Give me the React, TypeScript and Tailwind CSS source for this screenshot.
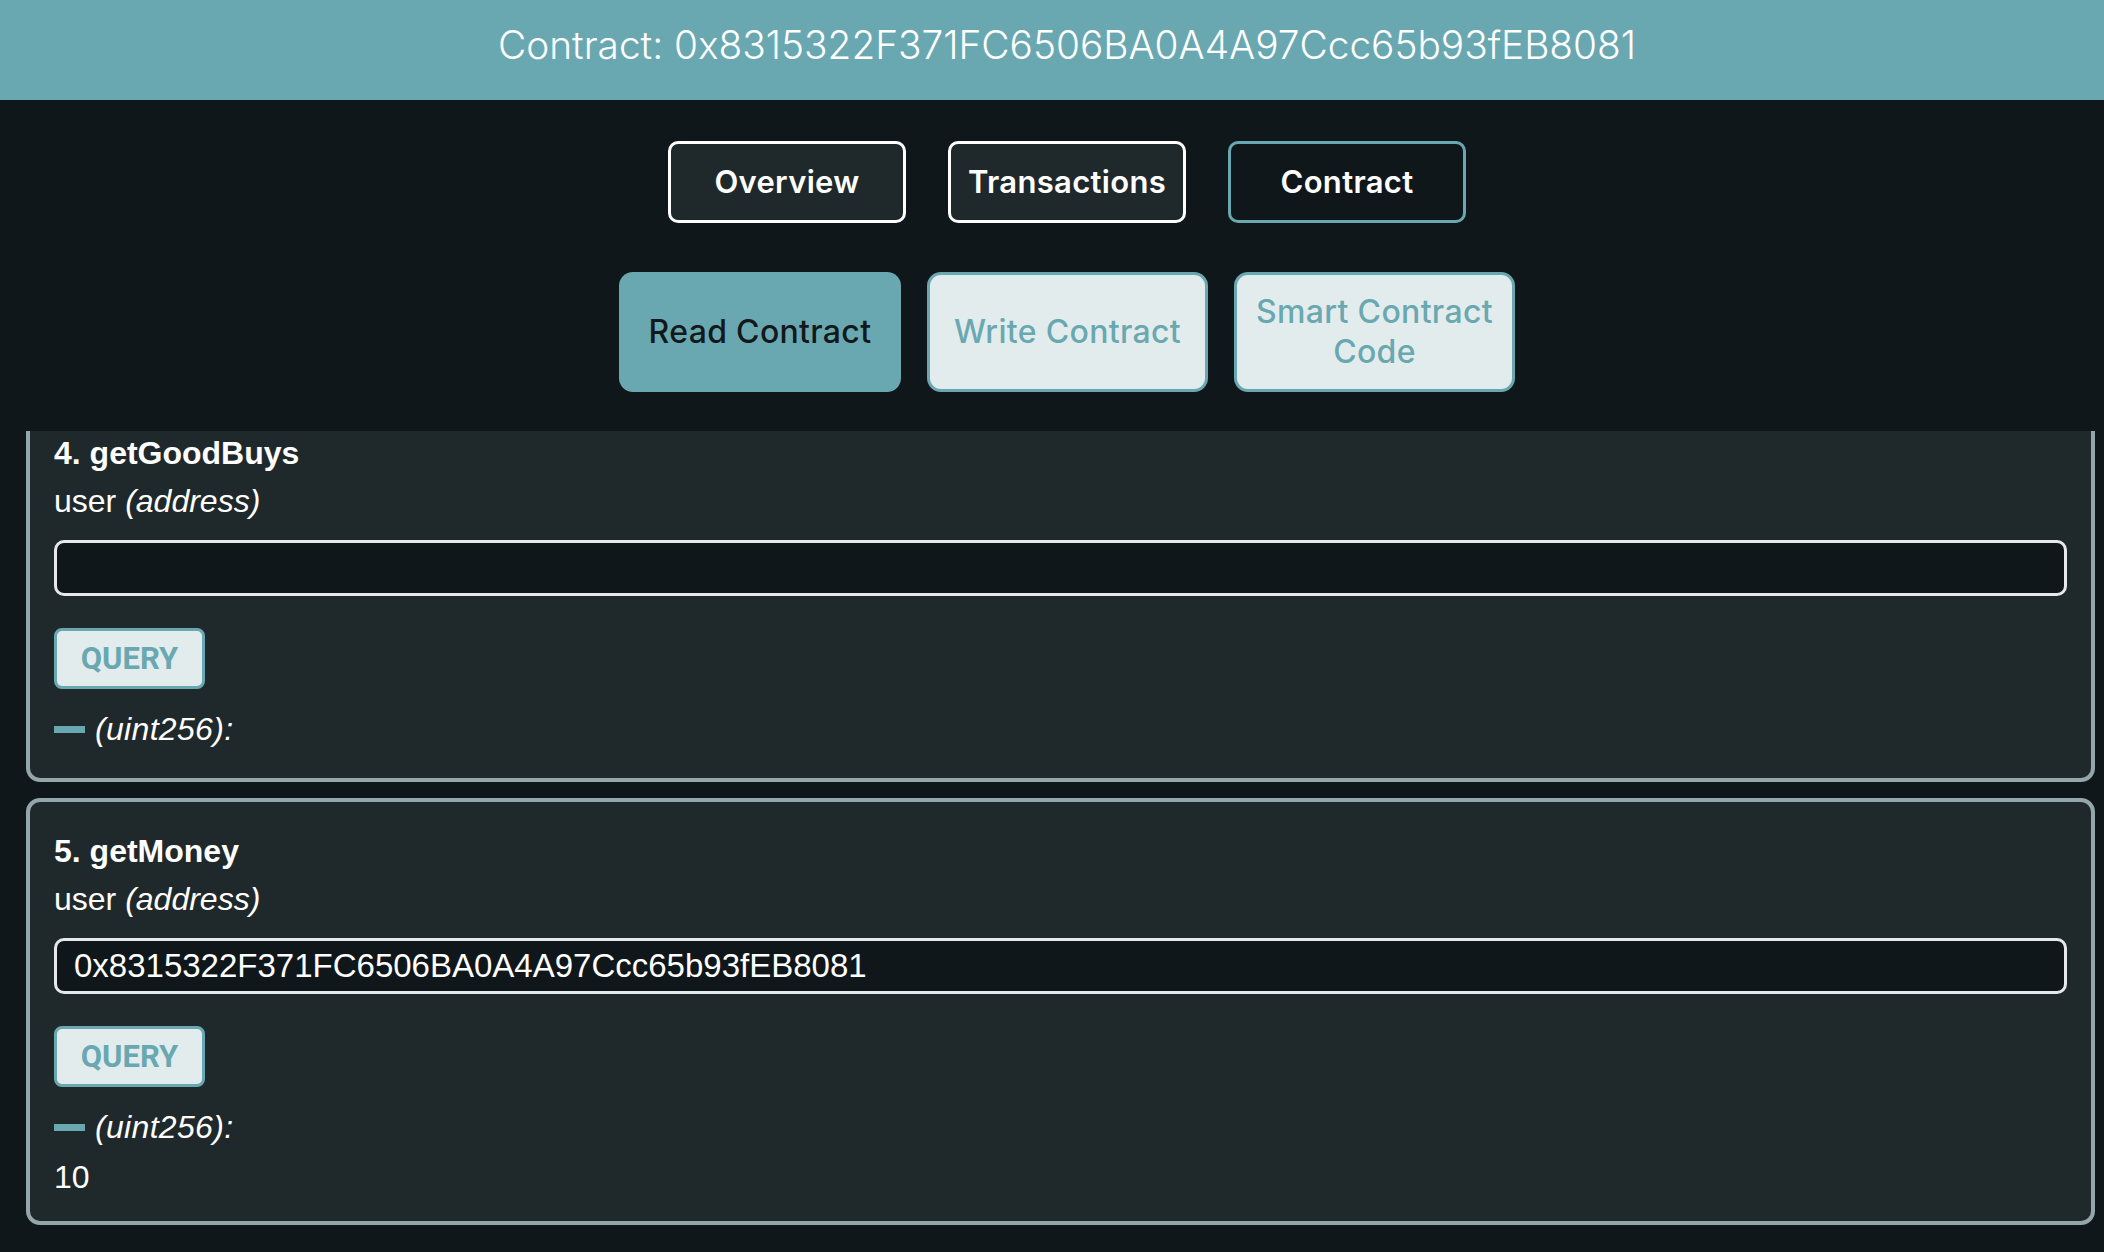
import React from 'react'

const ADDRESS = '0x8315322F371FC6506BA0A4A97Ccc65b93fEB8081'

type Fn = {
  id: number
  name: string
  input: string
  result?: string
}

const functions: Fn[] = [
  { id: 4, name: 'getGoodBuys', input: '' },
  { id: 5, name: 'getMoney', input: ADDRESS, result: '10' },
]

function TopTab({ label, active }: { label: string; active?: boolean }) {
  return (
    <button
      className={
        active
          ? 'w-[238px] h-[82px] rounded-[10px] border-[3px] border-[#6aa8b1] bg-[#10171a] text-white text-[31px] font-semibold tracking-[0.01em]'
          : 'w-[238px] h-[82px] rounded-[10px] border-[3px] border-white bg-[#1f292b] text-white text-[31px] font-semibold tracking-[0.01em]'
      }
    >
      {label}
    </button>
  )
}

function SubTab({ label, active }: { label: string; active?: boolean }) {
  return (
    <button
      className={
        active
          ? 'w-[282px] h-[120px] px-3 rounded-[14px] bg-[#6aa8b1] text-[#12191b] text-[32px] font-medium tracking-[0.01em] leading-[40px]'
          : 'w-[281px] h-[120px] px-3 rounded-[14px] border-[3px] border-[#6aa8b1] bg-[#e3ecec] text-[#6aa8b1] text-[32px] font-medium tracking-[0.01em] leading-[40px]'
      }
    >
      {label}
    </button>
  )
}

function FunctionCard({ fn }: { fn: Fn }) {
  return (
    <div className="rounded-[14px] border-4 border-[#93a6a9] bg-[#1f292b] px-6 pt-[25px] pb-[20px] text-white text-[32px] leading-[48px]">
      <div className="font-bold">
        {fn.id}. {fn.name}
      </div>
      <div>
        user <span className="italic">(address)</span>
      </div>
      <input
        readOnly
        value={fn.input}
        className="mt-[15px] block w-full h-[56px] rounded-[10px] border-[3px] border-[#e6e9eb] bg-[#10171a] px-[17px] text-white text-[33px] outline-none"
      />
      <button
        className="mt-8 block w-[151px] h-[61px] rounded-[8px] border-[3px] border-[#6aa8b1] bg-[#e3ecec] text-[#6aa8b1] text-[31px] font-bold leading-none"
        style={{ fontFamily: 'Roboto, "Liberation Sans", sans-serif' }}
      >
        QUERY
      </button>
      <div className="mt-4 flex items-center gap-[10px]">
        <span className="block w-[31px] h-[7px] bg-[#6aa8b1]" />
        <span className="italic tracking-[0.01em]">(uint256):</span>
      </div>
      <div className="mt-[2px] min-h-[3px]">{fn.result}</div>
    </div>
  )
}

export default function App() {
  return (
    <div
      className="h-screen overflow-hidden flex flex-col bg-[#10171a]"
      style={{ fontFamily: '"Liberation Sans", Arial, sans-serif' }}
    >
      <header className="h-[100px] shrink-0 bg-[#6aa8b1] flex items-center justify-center pl-[30px] pb-[10px]">
        <h1 className="text-white text-[38.8px] font-light" style={{ fontFamily: 'Inter, sans-serif' }}>
          Contract: {ADDRESS}
        </h1>
      </header>

      <nav
        className="h-[331px] shrink-0 flex flex-col items-center pt-[41px] gap-[49px] pl-[30px]"
        style={{ fontFamily: 'Inter, sans-serif' }}
      >
        <div className="flex gap-[42px]">
          <TopTab label="Overview" />
          <TopTab label="Transactions" />
          <TopTab label="Contract" active />
        </div>
        <div className="flex gap-[26px]">
          <SubTab label="Read Contract" active />
          <SubTab label="Write Contract" />
          <SubTab label="Smart Contract Code" />
        </div>
      </nav>

      <div className="flex-1 overflow-hidden pl-[26px] pr-[9px]">
        <div className="-mt-[31px] flex flex-col gap-[16px]">
          {functions.map((fn) => (
            <FunctionCard key={fn.id} fn={fn} />
          ))}
        </div>
      </div>
    </div>
  )
}
